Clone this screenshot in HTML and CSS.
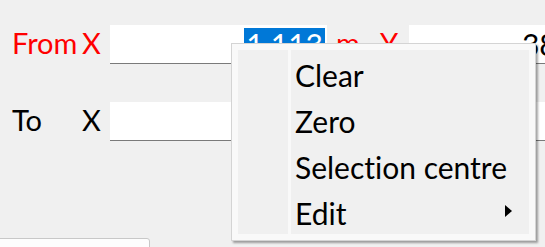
FILE: index.html
```html
<!DOCTYPE html>
<html lang="en">
  <head>
    <meta charset="UTF-8" />
    <meta name="viewport" content="width=device-width, initial-scale=1.0" />
    <title>Range</title>
    <link rel="stylesheet" href="styles.css">
  </head>
  <body>
    <div class="panel">
      <div class="row">
        <span class="label red">From</span>
        <span class="axis red">X</span>
        <div class="field"><span class="value sel">1.113</span></div>
        <span class="unit red">m</span>
        <span class="axis2 red">Y</span>
        <div class="field wide"><span class="value">38.556</span></div>
      </div>
      <div class="row">
        <span class="label">To</span>
        <span class="axis">X</span>
        <div class="field"><span class="value"></span></div>
        <span class="unit">m</span>
        <span class="axis2">Y</span>
        <div class="field wide"><span class="value"></span></div>
      </div>
      <div class="tab"></div>
    </div>

    <div class="menu">
      <div class="menu-inner">
        <div class="gutter"></div>
        <div class="gutter-line"></div>
        <ul class="items">
          <li><span>Clear</span></li>
          <li><span>Zero</span></li>
          <li><span>Selection centre</span></li>
          <li><span>Edit</span><span class="arrow"></span></li>
        </ul>
      </div>
    </div>
  </body>
</html>
```

FILE: styles.css
```css
body {
  margin: 0;
  width: 545px;
  height: 247px;
  overflow: hidden;
  background: #f0f0f0;
  font-family: "Lato", sans-serif;
  font-size: 30px;
  font-variant-ligatures: none;
  color: #000;
}
.panel {
  padding: 25px 0 0 12px;
}
.row {
  display: flex;
  align-items: center;
  height: 39px;
  white-space: nowrap;
}
.row + .row {
  margin-top: 38px;
}
.row > * {
  flex-shrink: 0;
}
.red {
  color: #ff0000;
}
.label,
.axis,
.unit,
.axis2 {
  font-size: 29px;
  margin-bottom: 4px;
}
.label {
  width: 70px;
}
.axis {
  width: 28px;
}
.field {
  box-sizing: border-box;
  width: 217px;
  height: 39px;
  padding: 3px 2px 0 0;
  background: #fff;
  border-bottom: 1px solid #7a7a7a;
  display: flex;
  justify-content: flex-end;
  align-items: flex-start;
  overflow: hidden;
}
.field.wide {
  width: 211px;
}
.value {
  line-height: 33px;
  padding: 0 2px;
}
.sel {
  background: #0078d7;
  color: #fff;
}
.unit {
  margin-left: 9px;
  width: 44px;
}
.axis2 {
  width: 29px;
}
.tab {
  box-sizing: border-box;
  margin: 97px 0 0 -20px;
  width: 158px;
  height: 20px;
  background: #fdfdfd;
  border: 1px solid #c8c8c8;
  border-radius: 0 3px 0 0;
}

/* context menu */
.menu {
  position: absolute;
  left: 231px;
  top: 43px;
  width: 305px;
  box-sizing: border-box;
  padding: 6px;
  background: #f9f9f9;
  border: 1px solid #d4d4d4;
  box-shadow: 2px 2px 2px rgba(0, 0, 0, 0.35);
}
.menu-inner {
  display: flex;
  background: #f0f0f0;
}
.gutter {
  width: 50px;
}
.gutter-line {
  width: 3px;
  background: #f9f9f9;
}
.items {
  flex: 1;
  list-style: none;
  margin: 0;
  padding: 0;
}
.items li {
  box-sizing: border-box;
  height: 46px;
  padding: 4px 17px 0 4px;
  line-height: 42px;
  white-space: nowrap;
  display: flex;
  justify-content: space-between;
  align-items: center;
}
.arrow {
  width: 0;
  height: 0;
  margin-bottom: 4px;
  border-left: 7px solid #000;
  border-top: 6.5px solid transparent;
  border-bottom: 6.5px solid transparent;
}
```
